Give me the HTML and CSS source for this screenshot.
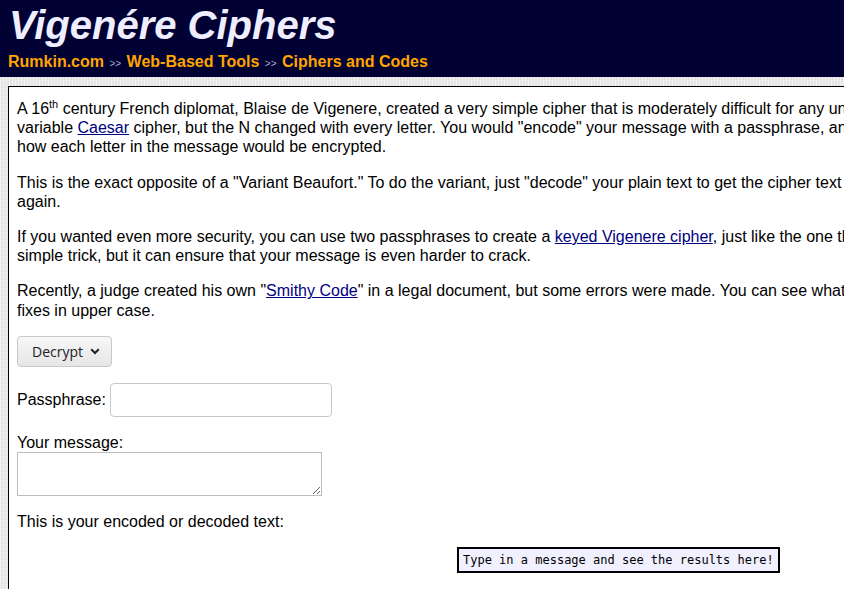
FILE: index.html
```html
<!DOCTYPE html>
<html>
<head>
<meta charset="utf-8">
<title>Vigenére Ciphers</title>
<link rel="stylesheet" href="styles.css">
</head>
<body>
<header class="top">
  <h1 class="title">Vigenére Ciphers</h1>
  <nav class="crumbs"><a href="#">Rumkin.com</a> <span class="sep">&gt;&gt;</span> <a href="#">Web-Based Tools</a> <span class="sep">&gt;&gt;</span> <a href="#">Ciphers and Codes</a></nav>
</header>
<div class="paper">
  <main class="content">
    <p>A 16<sup>th</sup> century French diplomat, Blaise de Vigenere, created a very simple cipher that is moderately difficult for any unintended parties to decipher. It is somewhat like a<br>variable <a href="#">Caesar</a> cipher, but the N changed with every letter. You would "encode" your message with a passphrase, and the letters of your passphrase would determine<br>how each letter in the message would be encrypted.</p>
    <p>This is the exact opposite of a "Variant Beaufort." To do the variant, just "decode" your plain text to get the cipher text and "encode" the cipher text to get the plain text<br>again.</p>
    <p>If you wanted even more security, you can use two passphrases to create a <a href="#">keyed Vigenere cipher</a>, just like the one that was used in the Kryptos sculpture. It is a<br>simple trick, but it can ensure that your message is even harder to crack.</p>
    <p>Recently, a judge created his own "<a href="#">Smithy Code</a>" in a legal document, but some errors were made. You can see what the correct passphrase would be; I've marked the<br>fixes in upper case.</p>
    <div class="row sel"><button class="select">Decrypt <svg class="chev" width="10" height="7" viewBox="0 0 10 7"><path d="M1.2 1.3 L5 5 L8.8 1.3" fill="none" stroke="#222" stroke-width="2"/></svg></button></div>
    <div class="row pass"><label>Passphrase:</label><input class="field" type="text"></div>
    <div class="row msg"><label>Your message:</label><textarea class="area"></textarea></div>
    <p class="enc">This is your encoded or decoded text:</p>
    <div class="outwrap"><div class="out">Type in a message and see the results here!</div></div>
  </main>
</div>
</body>
</html>
```
FILE: styles.css
```css
html, body {
  margin: 0;
  padding: 0;
  background: #fff;
}
body {
  font-family: "Liberation Sans", Arial, sans-serif;
  font-size: 16px;
  color: #000;
  overflow: hidden;
  width: 844px;
  height: 589px;
}
.top {
  background: #000033;
  height: 77px;
  padding: 3px 0 0 8px;
  box-sizing: border-box;
}
.title {
  margin: 0;
  padding: 0 0 0 1px;
  font-size: 40px;
  line-height: 44px;
  font-style: italic;
  font-weight: bold;
  color: #eeeeff;
}
.crumbs {
  margin-top: 5px;
  font-weight: bold;
  font-size: 16px;
  line-height: 20px;
  white-space: nowrap;
}
.crumbs a {
  color: #ffa500;
  text-decoration: none;
}
.crumbs .sep {
  color: #aaaacc;
  font-size: 10px;
  font-weight: normal;
  margin: 0 1px;
}
.paper {
  padding: 9px 0 0 8px;
  background-color: #e9e9e9;
  background-image:
    repeating-linear-gradient(90deg, rgba(255,255,255,0.55) 0 1px, transparent 1px 3px),
    repeating-linear-gradient(0deg, rgba(0,0,0,0.04) 0 1px, transparent 1px 2px);
  height: 600px;
}
.content {
  background: #fff;
  border-left: 1px solid #000;
  border-top: 1px solid #000;
  padding: 12px 0 0 8px;
  width: 1100px;
  height: 700px;
}
.content p {
  margin: 0 0 16px 0;
  white-space: nowrap;
  line-height: 19.2px;
}
.content a {
  color: #000080;
}
sup {
  font-size: 11px;
  line-height: 0;
}
.row {
  display: flex;
}
.sel {
  margin-bottom: 16px;
}
.select {
  font-family: "Open Sans", sans-serif;
  font-size: 14px;
  color: #222;
  background: linear-gradient(#f7f7f7, #e6e6e6);
  border: 1px solid #c8c8c8;
  border-radius: 4px;
  height: 31px;
  width: 95px;
  padding: 0 0 0 14px;
  display: flex;
  align-items: center;
  gap: 7px;
  margin: 0;
}
.chev {
  display: block;
  margin-top: 1px;
}
.pass {
  align-items: center;
  gap: 4px;
  margin-bottom: 16px;
}
.field {
  width: 222px;
  height: 34px;
  box-sizing: border-box;
  border: 1px solid #c8c8c8;
  border-radius: 4px;
  padding: 0;
  margin: 0;
}
.msg {
  flex-direction: column;
  align-items: flex-start;
  margin-bottom: 16px;
}
.msg label {
  line-height: 19.2px;
}
.area {
  width: 305px;
  height: 44px;
  box-sizing: border-box;
  border: 1px solid #bdbdbd;
  margin: 0;
  padding: 0;
  display: block;
}
.content p.enc {
  margin: 0;
}
.outwrap {
  padding: 16px 0 0 440px;
}
.out {
  display: inline-block;
  border: 2px solid #000;
  background: #f0f0ff;
  font-family: "DejaVu Sans Mono", monospace;
  font-size: 12px;
  line-height: 16px;
  padding: 3px 4px 3px 4px;
}
```
